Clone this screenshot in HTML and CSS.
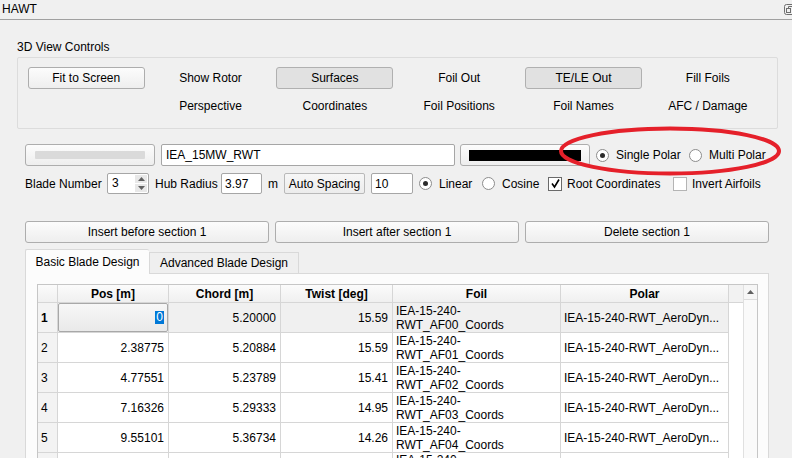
FILE: index.html
```html
<!DOCTYPE html>
<html>
<head>
<meta charset="utf-8">
<title>HAWT</title>
<link rel="stylesheet" href="styles.css">
</head>
<body>
<div class="titlebar">
  <span class="title">HAWT</span>
  <svg class="float-icon" width="8" height="12" viewBox="0 0 8 12">
    <rect x="0.5" y="0.5" width="11" height="10" rx="2" fill="none" stroke="#6e6e6e"/>
    <rect x="2.5" y="4.5" width="4" height="4" fill="none" stroke="#6e6e6e"/>
    <path d="M4.5 4.5 V2.5 H9" fill="none" stroke="#6e6e6e"/>
  </svg>
</div>

<div class="main">
  <div class="group-label">3D View Controls</div>
  <div class="group">
    <div class="grid6">
      <div class="btn view-btn">Fit to Screen</div>
      <div class="opt">Show Rotor</div>
      <div class="btn view-btn checked">Surfaces</div>
      <div class="opt">Foil Out</div>
      <div class="btn view-btn checked">TE/LE Out</div>
      <div class="opt">Fill Foils</div>
      <div class="opt"></div>
      <div class="opt">Perspective</div>
      <div class="opt">Coordinates</div>
      <div class="opt">Foil Positions</div>
      <div class="opt">Foil Names</div>
      <div class="opt">AFC / Damage</div>
    </div>
  </div>

  <div class="row row-a">
    <div class="btn wide-btn"><span class="ghost-bar"></span></div>
    <div class="field name-field">IEA_15MW_RWT</div>
    <div class="btn wide-btn color-btn"><span class="black-bar"></span></div>
    <div class="radio on sp"><span class="dot"><i></i></span><span class="lbl w-single">Single Polar</span></div>
    <div class="radio"><span class="dot"></span><span class="lbl">Multi Polar</span></div>
  </div>

  <div class="row row-b">
    <span class="lbl w-blade">Blade Number</span>
    <div class="spin">
      <span class="spin-val">3</span>
      <span class="spin-arrows">
        <span class="arr"><svg width="7" height="4" viewBox="0 0 7 4"><path d="M0 4 L3.5 0 L7 4 Z" fill="#606060"/></svg></span>
        <span class="arr"><svg width="7" height="4" viewBox="0 0 7 4"><path d="M0 0 L3.5 4 L7 0 Z" fill="#606060"/></svg></span>
      </span>
    </div>
    <span class="lbl w-hub">Hub Radius</span>
    <div class="field small-field">3.97</div>
    <span class="lbl w-m">m</span>
    <div class="btn auto-btn">Auto Spacing</div>
    <div class="field small-field ten">10</div>
    <div class="radio on lin"><span class="dot"><i></i></span><span class="lbl w-linear">Linear</span></div>
    <div class="radio"><span class="dot"></span><span class="lbl w-cosine">Cosine</span></div>
    <div class="check"><span class="box"><svg width="11" height="11" viewBox="0 0 11 11"><path d="M2 5.5 L4.5 9 L9 1.5" fill="none" stroke="#000" stroke-width="1.6"/></svg></span><span class="lbl w-root">Root Coordinates</span></div>
    <div class="check"><span class="box light"></span><span class="lbl">Invert Airfoils</span></div>
  </div>

  <div class="row actions">
    <div class="btn act-btn">Insert before section 1</div>
    <div class="btn act-btn">Insert after section 1</div>
    <div class="btn act-btn">Delete section 1</div>
  </div>

  <div class="row tabs">
    <div class="tab active">Basic Blade Design</div>
    <div class="tab">Advanced Blade Design</div>
  </div>
  <div class="pane">
    <div class="table">
      <div class="tgrid">
        <div class="hc corner"></div>
        <div class="hc">Pos [m]</div>
        <div class="hc">Chord [m]</div>
        <div class="hc">Twist [deg]</div>
        <div class="hc">Foil</div>
        <div class="hc">Polar</div>
        <div class="hc filler"></div>

        <div class="rh cur">1</div>
        <div class="c num sel editor-cell"><div class="editor"><span class="hl">0</span></div></div>
        <div class="c num sel">5.20000</div>
        <div class="c num sel">15.59</div>
        <div class="c foil sel">IEA-15-240-<br>RWT_AF00_Coords</div>
        <div class="c pol sel">IEA-15-240-RWT_AeroDyn...</div>
        <div class="fill"></div>

        <div class="rh">2</div>
        <div class="c num">2.38775</div>
        <div class="c num">5.20884</div>
        <div class="c num">15.59</div>
        <div class="c foil">IEA-15-240-<br>RWT_AF01_Coords</div>
        <div class="c pol">IEA-15-240-RWT_AeroDyn...</div>
        <div class="fill"></div>

        <div class="rh">3</div>
        <div class="c num">4.77551</div>
        <div class="c num">5.23789</div>
        <div class="c num">15.41</div>
        <div class="c foil">IEA-15-240-<br>RWT_AF02_Coords</div>
        <div class="c pol">IEA-15-240-RWT_AeroDyn...</div>
        <div class="fill"></div>

        <div class="rh">4</div>
        <div class="c num">7.16326</div>
        <div class="c num">5.29333</div>
        <div class="c num">14.95</div>
        <div class="c foil">IEA-15-240-<br>RWT_AF03_Coords</div>
        <div class="c pol">IEA-15-240-RWT_AeroDyn...</div>
        <div class="fill"></div>

        <div class="rh">5</div>
        <div class="c num">9.55101</div>
        <div class="c num">5.36734</div>
        <div class="c num">14.26</div>
        <div class="c foil">IEA-15-240-<br>RWT_AF04_Coords</div>
        <div class="c pol">IEA-15-240-RWT_AeroDyn...</div>
        <div class="fill"></div>

        <div class="rh"></div>
        <div class="c num"></div>
        <div class="c num"></div>
        <div class="c num"></div>
        <div class="c foil top">IEA-15-240-</div>
        <div class="c pol"></div>
        <div class="fill"></div>
      </div>
      <div class="scrollbar">
        <div class="sb-up"><svg width="7" height="4" viewBox="0 0 7 4"><path d="M0 4 L3.5 0 L7 4 Z" fill="#606060"/></svg></div>
      </div>
    </div>
  </div>
</div>

<svg class="annotation" width="240" height="60" viewBox="0 0 240 60">
  <ellipse cx="120" cy="30" rx="109" ry="22.5" fill="none" stroke="#e5202a" stroke-width="4"/>
</svg>
</body>
</html>
```

FILE: styles.css
```css
* { box-sizing: border-box; }

body {
  margin: 0;
  width: 792px;
  height: 458px;
  overflow: hidden;
  position: relative;
  background: #f0f0f0;
  font-family: "Liberation Sans", Arial, sans-serif;
  font-size: 12px;
  color: #000;
}

.titlebar {
  height: 20px;
  border-bottom: 1px solid #a0a0a0;
  display: flex;
  align-items: center;
  justify-content: space-between;
  padding-left: 2px;
}
.title { line-height: 19px; }
.float-icon { display: block; margin-top: 1px; }

.main { padding-left: 17px; }

.group-label {
  margin-top: 20px;
  height: 14px;
  line-height: 14px;
}

.group {
  margin-top: 3px;
  width: 761px;
  height: 72px;
  border: 1px solid #dcdcdc;
  border-radius: 2px;
  padding: 9px 7px 10px 6px;
}

.grid6 {
  display: grid;
  grid-template-columns: repeat(6, 1fr);
  grid-auto-rows: 22px;
  row-gap: 6px;
  align-items: center;
  justify-items: center;
}
.opt { line-height: 22px; }

.btn {
  height: 22px;
  border: 1px solid #adadad;
  border-radius: 3px;
  background: linear-gradient(#fcfcfc, #eeeeee);
  display: flex;
  align-items: center;
  justify-content: center;
  white-space: nowrap;
}
.view-btn { width: 117px; }
.btn.checked {
  background: #e1e1e1;
  border-color: #b0b0b0;
}

.row {
  display: flex;
  align-items: center;
  margin-left: 8px;
}

.row-a { margin-top: 15px; height: 22px; }
.wide-btn { width: 130px; }
.ghost-bar {
  width: 110px;
  height: 8px;
  background: #dadada;
  border-radius: 1px;
}
.color-btn { margin-left: 5px; }
.black-bar {
  width: 112px;
  height: 11px;
  background: #000;
}

.field {
  height: 22px;
  border: 1px solid #a6a6a6;
  border-radius: 2px;
  background: #fff;
  display: flex;
  align-items: center;
  padding-left: 4px;
}
.name-field { margin-left: 6px; width: 294px; }

.radio, .check { display: flex; align-items: center; }
.radio .dot {
  width: 13px;
  height: 13px;
  border: 1px solid #8c8c8c;
  border-radius: 50%;
  background: #fff;
  margin-right: 7px;
  display: flex;
  align-items: center;
  justify-content: center;
}
.radio .dot i {
  width: 5px;
  height: 5px;
  border-radius: 50%;
  background: #2b2b2b;
}
.sp { margin-left: 6px; }
.lbl { display: inline-block; white-space: nowrap; }
.w-single { width: 73px; }

.row-b { margin-top: 7px; height: 21px; }
.w-blade { width: 82px; }
.spin {
  width: 42px;
  height: 21px;
  border: 1px solid #a6a6a6;
  border-radius: 2px;
  background: #fff;
  display: flex;
}
.spin-val { flex: 1; padding-left: 4px; line-height: 19px; }
.spin-arrows {
  width: 13px;
  display: flex;
  flex-direction: column;
  padding: 1px 1px 1px 0;
  gap: 1px;
}
.arr {
  flex: 1;
  background: #e8e8e8;
  display: flex;
  align-items: center;
  justify-content: center;
}
.arr svg { display: block; }
.w-hub { width: 66px; margin-left: 6px; }
.small-field { width: 41px; height: 21px; padding-left: 3px; }
.w-m { width: 16px; margin-left: 6px; }
.auto-btn {
  width: 81px;
  height: 21px;
  border-radius: 2px;
  border-color: #b9b9b9;
  background: linear-gradient(#f7f7f7, #ececec);
}
.ten { margin-left: 6px; width: 42px; }
.lin { margin-left: 6px; }
.w-linear { width: 43px; }
.w-cosine { width: 46px; }
.check .box {
  width: 14px;
  height: 14px;
  border: 1px solid #6a6a6a;
  background: #fff;
  margin-right: 5px;
  display: flex;
  align-items: center;
  justify-content: center;
}
.check .box.light { border-color: #b4b4b4; }
.w-root { width: 106px; }

.actions { margin-top: 27px; gap: 6px; }
.act-btn { width: 244px; }

.tabs {
  margin-top: 6px;
  height: 24px;
  align-items: flex-end;
}
.tab {
  height: 21px;
  width: 150px;
  border: 1px solid #d9d9d9;
  border-bottom: none;
  background: #efefef;
  display: flex;
  align-items: center;
  justify-content: center;
  white-space: nowrap;
}
.tab.active {
  width: 124px;
  height: 25px;
  margin-bottom: -1px;
  background: #fcfcfc;
  position: relative;
  z-index: 1;
  border-right: none;
  border-radius: 2px 2px 0 0;
}

.pane {
  margin-left: 8px;
  width: 744px;
  height: 200px;
  border: 1px solid #d9d9d9;
  background: #fcfcfc;
  padding: 10px 10px 0 11px;
}

.table {
  width: 721px;
  height: 200px;
  border: 1px solid #c6c6c6;
  background: #fff;
  display: flex;
}
.tgrid {
  display: grid;
  grid-template-columns: 20px 111px 112px 112px 168px 168px 14px;
  grid-template-rows: 18px repeat(6, 30px);
  align-content: start;
}
.hc {
  background: linear-gradient(#fbfbfb, #f0f0f0);
  border-right: 1px solid #d6d6d6;
  border-bottom: 1px solid #d6d6d6;
  font-weight: bold;
  display: flex;
  align-items: center;
  justify-content: center;
}
.hc.filler { border-right: none; background: #f2f2f2; }
.rh {
  background: #f3f3f3;
  border-right: 1px solid #d6d6d6;
  border-bottom: 1px solid #d6d6d6;
  display: flex;
  align-items: center;
  padding-left: 3px;
}
.rh.cur { font-weight: bold; }
.c {
  border-right: 1px solid #d6d6d6;
  border-bottom: 1px solid #d6d6d6;
  display: flex;
  align-items: center;
  white-space: nowrap;
  overflow: hidden;
}
.c.sel { background: #f0f0f0; }
.num { justify-content: flex-end; padding-right: 4px; }
.foil {
  white-space: normal;
  line-height: 14px;
  padding-left: 3px;
  padding-top: 1px;
}
.foil.top { align-items: flex-start; padding-top: 0; }
.pol { padding-left: 3px; }
.fill { background: #fff; }

.editor-cell { padding: 0; }
.editor {
  width: 100%;
  height: 100%;
  border: 1px solid #a8a8a8;
  border-radius: 2px;
  background: linear-gradient(#f7f7f7, #e9e9e9);
  display: flex;
  align-items: center;
  justify-content: flex-end;
  padding-right: 3px;
}
.hl {
  background: #0078d7;
  color: #fff;
  padding: 0 1px;
  line-height: 13px;
}

.scrollbar {
  width: 14px;
  border-left: 1px solid #e0e0e0;
  background: #fafafa;
}
.sb-up {
  height: 15px;
  border-bottom: 1px solid #dcdcdc;
  background: #f6f6f6;
  display: flex;
  align-items: center;
  justify-content: center;
}
.sb-up svg { display: block; }

.annotation {
  position: absolute;
  left: 550px;
  top: 121px;
}
```
